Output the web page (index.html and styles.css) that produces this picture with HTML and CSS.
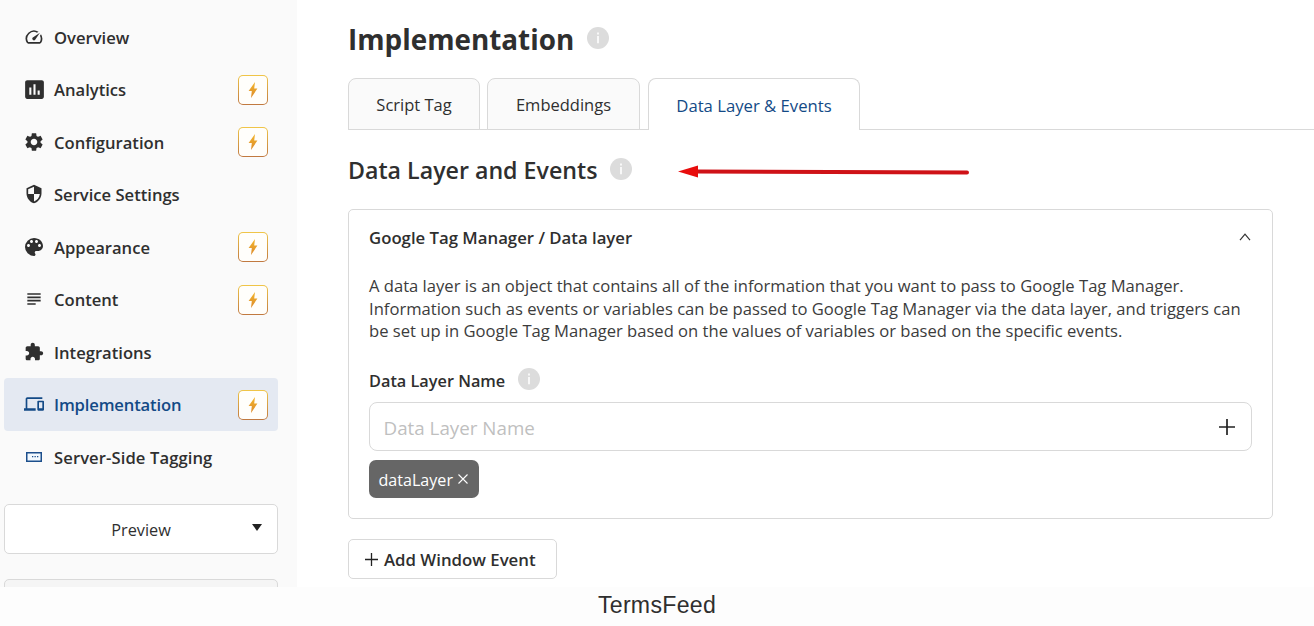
FILE: index.html
```
<!DOCTYPE html>
<html lang="en">
<head>
    <meta charset="UTF-8">
    <meta name="viewport" content="width=device-width, initial-scale=1.0">
    <title>Implementation</title>
    <link rel="stylesheet" href="styles.css">
</head>
<body>
    <svg class="defs" width="0" height="0">
        <defs>
            <linearGradient id="boltFill" x1="0" y1="0" x2="0" y2="1">
                <stop offset="0" stop-color="#f3b62c"/>
                <stop offset="1" stop-color="#dc8a2c"/>
            </linearGradient>
            <symbol id="bolt" viewBox="0 0 10 16">
                <path fill="url(#boltFill)" d="M7 0L.6 9h3.2L3 16l6.4-9.400H6.200z"/>
            </symbol>
            <symbol id="info" viewBox="0 0 22 22">
                <circle cx="11" cy="11" r="11" fill="#dcdcdc"/>
                <path fill="#fff" d="M10.2 5.5h1.6v1.9h-1.6zM10.2 9h1.6v7.2h-1.6z"/>
            </symbol>
        </defs>
    </svg>

    <div class="page">
        <aside class="sidebar">
            <nav class="menu">
                <a class="menu-item">
                    <span class="icon"><svg width="20" height="20" viewBox="0 0 24 24"><path d="M20.38 8.57l-1.23 1.85a8 8 0 0 1-.22 7.58H5.07A8 8 0 0 1 15.58 6.85l1.85-1.23A10 10 0 0 0 3.35 19a2 2 0 0 0 1.72 1h13.85a2 2 0 0 0 1.74-1 10 10 0 0 0-.27-10.44zm-9.79 6.84a2 2 0 0 0 2.83 0l5.66-8.49-8.49 5.66a2 2 0 0 0 0 2.83z"/></svg></span>
                    <span class="label">Overview</span>
                </a>
                <a class="menu-item">
                    <span class="icon"><svg width="25" height="25" viewBox="0 0 24 24"><path d="M19 3H5c-1.1 0-2 .9-2 2v14c0 1.1.9 2 2 2h14c1.1 0 2-.9 2-2V5c0-1.1-.9-2-2-2zM9 17H7v-7h2v7zm4 0h-2V7h2v10zm4 0h-2v-4h2v4z"/></svg></span>
                    <span class="label">Analytics</span>
                    <span class="badge"><svg width="10" height="16"><use href="#bolt"/></svg></span>
                </a>
                <a class="menu-item">
                    <span class="icon"><svg width="22" height="22" viewBox="0 0 24 24"><path d="M19.14 12.94c.04-.3.06-.61.06-.94 0-.32-.02-.64-.07-.94l2.03-1.58c.18-.14.23-.41.12-.61l-1.92-3.32c-.12-.22-.37-.29-.59-.22l-2.39.96c-.5-.38-1.03-.7-1.62-.94l-.36-2.54c-.04-.24-.24-.41-.48-.41h-3.84c-.24 0-.43.17-.47.41l-.36 2.54c-.59.24-1.13.57-1.62.94l-2.39-.96c-.22-.08-.47 0-.59.22L2.74 8.87c-.12.21-.08.47.12.61l2.03 1.58c-.05.3-.09.63-.09.94s.02.64.07.94l-2.03 1.58c-.18.14-.23.41-.12.61l1.92 3.32c.12.22.37.29.59.22l2.39-.96c.5.38 1.03.7 1.62.94l.36 2.54c.05.24.24.41.48.41h3.84c.24 0 .44-.17.47-.41l.36-2.54c.59-.24 1.13-.56 1.62-.94l2.39.96c.22.08.47 0 .59-.22l1.92-3.32c.12-.22.07-.47-.12-.61l-2.01-1.58zM12 15.6c-1.98 0-3.6-1.62-3.6-3.6s1.62-3.6 3.6-3.6 3.6 1.62 3.6 3.6-1.62 3.6-3.6 3.6z"/></svg></span>
                    <span class="label">Configuration</span>
                    <span class="badge"><svg width="10" height="16"><use href="#bolt"/></svg></span>
                </a>
                <a class="menu-item">
                    <span class="icon"><svg width="20" height="20" viewBox="0 0 24 24"><path d="M12 1L3 5v6c0 5.55 3.84 10.74 9 12 5.16-1.26 9-6.45 9-12V5l-9-4zm0 10.99h7c-.53 4.12-3.28 7.79-7 8.94V12H5V6.3l7-3.11v8.8z"/></svg></span>
                    <span class="label">Service Settings</span>
                </a>
                <a class="menu-item">
                    <span class="icon"><svg width="24" height="24" viewBox="0 0 24 24"><path d="M12 3a9 9 0 0 0 0 18c.83 0 1.5-.67 1.5-1.5 0-.39-.15-.74-.39-1.01-.23-.26-.38-.61-.38-.99 0-.83.67-1.5 1.5-1.5H16c2.76 0 5-2.24 5-5 0-4.42-4.03-8-9-8zm-5.5 9c-.83 0-1.5-.67-1.5-1.5S5.67 9 6.5 9 8 9.67 8 10.5 7.33 12 6.5 12zm3-4C8.67 8 8 7.33 8 6.5S8.67 5 9.5 5s1.5.67 1.5 1.5S10.33 8 9.5 8zm5 0c-.83 0-1.5-.67-1.5-1.5S13.67 5 14.5 5s1.5.67 1.5 1.5S15.33 8 14.5 8zm3 4c-.83 0-1.5-.67-1.5-1.5S16.67 9 17.5 9s1.5.67 1.5 1.5-.67 1.5-1.5 1.5z"/></svg></span>
                    <span class="label">Appearance</span>
                    <span class="badge"><svg width="10" height="16"><use href="#bolt"/></svg></span>
                </a>
                <a class="menu-item">
                    <span class="icon"><svg width="20" height="20" viewBox="0 0 24 24"><path d="M14 17H4v2h10v-2zm6-8H4v2h16V9zM4 15h16v-2H4v2zM4 5v2h16V5H4z"/></svg></span>
                    <span class="label">Content</span>
                    <span class="badge"><svg width="10" height="16"><use href="#bolt"/></svg></span>
                </a>
                <a class="menu-item">
                    <span class="icon"><svg width="20" height="20" viewBox="0 0 24 24"><path d="M20.5 11H19V7c0-1.1-.9-2-2-2h-4V3.5C13 2.12 11.88 1 10.5 1S8 2.12 8 3.5V5H4c-1.1 0-1.99.9-1.99 2v3.8H3.5c1.49 0 2.7 1.21 2.7 2.7s-1.21 2.7-2.7 2.7H2V20c0 1.1.9 2 2 2h3.8v-1.5c0-1.49 1.21-2.7 2.7-2.7 1.49 0 2.7 1.21 2.7 2.7V22H17c1.1 0 2-.9 2-2v-4h1.5c1.38 0 2.5-1.12 2.5-2.5S21.88 11 20.5 11z"/></svg></span>
                    <span class="label">Integrations</span>
                </a>
                <a class="menu-item active">
                    <span class="icon"><svg width="20" height="20" viewBox="0 0 24 24"><path d="M4 6h18V4H4c-1.1 0-2 .9-2 2v11H0v3h14v-3H4V6zm19 2h-6c-.55 0-1 .45-1 1v10c0 .55.45 1 1 1h6c.55 0 1-.45 1-1V9c0-.55-.45-1-1-1zm-1 9h-4v-7h4v7z"/></svg></span>
                    <span class="label">Implementation</span>
                    <span class="badge"><svg width="10" height="16"><use href="#bolt"/></svg></span>
                </a>
                <a class="menu-item server">
                    <span class="icon"><svg width="16" height="10" viewBox="0 0 16 10"><rect x=".75" y=".75" width="14.5" height="8.5" fill="#f2f9ff" stroke="#1c4f8c" stroke-width="1.5"/><path fill="#1c4f8c" d="M6 4h1.3v1.3H6zM8.500 4h1.3v1.3H8.500zM11 4h1.3v1.3H11z"/></svg></span>
                    <span class="label">Server-Side Tagging</span>
                </a>
            </nav>

            <button type="button" class="preview-button">
                Preview
                <span class="caret"></span>
            </button>
            <button type="button" class="next-button"></button>
        </aside>

        <main class="content">
            <h1>Implementation <svg class="info" width="22" height="22"><use href="#info"/></svg></h1>

            <div class="tabs">
                <a class="tab tab-script">Script Tag</a>
                <a class="tab tab-embed">Embeddings</a>
                <a class="tab tab-layer active">Data Layer &amp; Events</a>
            </div>

            <div class="section-title">
                <h2>Data Layer and Events</h2>
                <svg class="info" width="22" height="22"><use href="#info"/></svg>
                <svg class="arrow" width="292" height="14" viewBox="0 0 292 14">
                    <path d="M18 6.5L289 7.5" stroke="#cf1217" stroke-width="4" stroke-linecap="round"/>
                    <path d="M0 6.5L20 .5v12z" fill="#e80c0c"/>
                </svg>
            </div>

            <section class="card">
                <div class="card-header">
                    <h3>Google Tag Manager / Data layer</h3>
                    <svg width="12" height="8" viewBox="0 0 12 8"><path d="M1 7.2l5-6 5 6" fill="none" stroke="#333" stroke-width="1.2"/></svg>
                </div>
                <p>A data layer is an object that contains all of the information that you want to pass to Google Tag Manager.<br>
                Information such as events or variables can be passed to Google Tag Manager via the data layer, and triggers can<br>
                be set up in Google Tag Manager based on the values of variables or based on the specific events.</p>

                <div class="field-label">
                    <label for="layerName">Data Layer Name</label>
                    <svg class="info" width="22" height="22"><use href="#info"/></svg>
                </div>
                <div class="field">
                    <input type="text" id="layerName" placeholder="Data Layer Name">
                    <svg width="16" height="16" viewBox="0 0 16 16"><path d="M8 0v16M0 8h16" stroke="#222" stroke-width="1.7"/></svg>
                </div>
                <span class="tag">dataLayer
                    <svg width="10" height="10" viewBox="0 0 10 10"><path d="M.5.5l9 9M9.5.5l-9 9" stroke="#fff" stroke-width="1.1"/></svg>
                </span>
            </section>

            <button type="button" class="add-button">
                <svg width="13" height="13" viewBox="0 0 13 13"><path d="M6.5 0v13M0 6.5h13" stroke="#222" stroke-width="1.3"/></svg>
                <span class="label">Add Window Event</span>
            </button>
        </main>
    </div>

    <footer>TermsFeed</footer>
</body>
</html>
```
FILE: styles.css
```
* {
    box-sizing: border-box;
}

body {
    font-family: 'Open Sans', sans-serif;
    font-size: 16.5px;
    color: #2f2f2f;
    background-color: #fff;
    margin: 0;
    height: 626px;
    overflow: hidden;
}

h1, h2, h3, p {
    margin: 0;
}

button {
    font-family: inherit;
    color: inherit;
    background-color: #fff;
    border: 1px solid #d9d9d9;
    border-radius: 5px;
    cursor: pointer;
}

svg {
    display: block;
    flex: none;
}

.defs {
    position: absolute;
}

.page {
    display: flex;
    height: 587px;
    overflow: hidden;
}

/* sidebar */
.sidebar {
    width: 297px;
    flex: none;
    padding: 10.5px 19px 0 4px;
    background-color: #fafafa;
}

.menu-item {
    display: flex;
    align-items: center;
    height: 52.5px;
    padding: 0 10px 0 17px;
    border-radius: 4px;
    font-size: 16.6px;
    font-weight: 600;
}

.menu-item.active {
    background-color: #e4e9f2;
    color: #134a86;
    letter-spacing: -0.15px;
}

.menu-item.server {
    letter-spacing: 0.1px;
}

.label {
    padding-top: 1px;
}

.icon {
    display: flex;
    justify-content: center;
    width: 26px;
    margin-right: 7px;
    fill: currentColor;
}

.badge {
    display: flex;
    justify-content: center;
    align-items: center;
    width: 30px;
    height: 30px;
    margin-top: 1px;
    margin-left: auto;
    border: 1px solid transparent;
    border-radius: 5px;
    background: linear-gradient(#fffefb, #fffefb) padding-box, linear-gradient(#f0c648, #c07840) border-box;
}

.preview-button {
    display: flex;
    justify-content: center;
    align-items: center;
    position: relative;
    width: 274px;
    height: 50px;
    margin-top: 21px;
    padding: 2px 0 0;
    font-size: 16.3px;
}

.caret {
    position: absolute;
    right: 15px;
    top: 19px;
    border: 5.5px solid transparent;
    border-top: 7px solid #222;
    border-bottom: 0;
}

.next-button {
    display: block;
    width: 274px;
    height: 50px;
    margin-top: 25px;
    background-color: #f5f5f5;
}

/* main column */
.content {
    flex: 1;
    padding: 17px 0 0 51px;
}

h1 {
    display: flex;
    gap: 13px;
    height: 61px;
    font-size: 27.85px;
    font-weight: 700;
    line-height: 44px;
}

h1 .info {
    margin-top: 10px;
}

.tabs {
    display: flex;
    height: 52px;
    border-bottom: 1px solid #d9d9d9;
}

.tab {
    display: flex;
    justify-content: center;
    align-items: center;
    height: 52px;
    border: 1px solid #d9d9d9;
    border-radius: 8px 8px 0 0;
    background-color: #fafafa;
}

.tab-script {
    width: 132px;
    margin-right: 7px;
}

.tab-embed {
    width: 153px;
    margin-right: 8px;
}

.tab-layer {
    width: 212px;
    font-size: 16.7px;
}

.tab.active {
    padding-top: 2px;
    border-bottom: 0;
    background-color: #fff;
    color: #134a86;
}

.section-title {
    display: flex;
    align-items: center;
    height: 79px;
}

.section-title .info {
    margin-bottom: 2px;
}

h2 {
    width: 262px;
    font-size: 23.2px;
    font-weight: 600;
    white-space: nowrap;
}

.arrow {
    margin: 5px 0 0 46px;
}

.card {
    width: 925px;
    height: 310px;
    padding: 16px 20px 0;
    border: 1px solid #d9d9d9;
    border-radius: 5px;
}

.card-header {
    display: flex;
    justify-content: space-between;
    align-items: center;
    height: 22px;
    padding-right: 1px;
}

h3 {
    font-size: 16.75px;
    font-weight: 600;
}

.card p {
    margin-top: 27px;
    font-size: 16.6px;
    line-height: 22.7px;
    white-space: nowrap;
    color: #3c3c3c;
}

.field-label {
    display: flex;
    gap: 13px;
    align-items: center;
    height: 22px;
    margin-top: 25px;
    font-size: 16.3px;
    font-weight: 600;
}

.field-label label {
    padding-top: 3px;
}

.field {
    display: flex;
    align-items: center;
    height: 49px;
    margin-top: 12px;
    padding: 0 16px 0 13.5px;
    border: 1px solid #d9d9d9;
    border-radius: 8px;
}

.field input {
    flex: 1;
    padding: 2px 0 0;
    border: 0;
    outline: 0;
    background: none;
    font-family: inherit;
    font-size: 18.8px;
}

.field input::placeholder {
    color: #bfbfbf;
}

.tag {
    display: inline-flex;
    align-items: center;
    gap: 5px;
    height: 38px;
    margin-top: 9px;
    padding: 2px 11px 0 9.5px;
    border-radius: 7px;
    background-color: #666;
    color: #fff;
    font-size: 16.1px;
}

.tag svg {
    margin-bottom: 3px;
}

.add-button {
    display: flex;
    align-items: center;
    gap: 6px;
    width: 209px;
    height: 40px;
    margin-top: 20px;
    padding: 0 0 0 16px;
    font-size: 16.8px;
    font-weight: 600;
    white-space: nowrap;
}

footer {
    height: 39px;
    background-color: #fdfdfd;
    font-family: 'Liberation Sans', Arial, sans-serif;
    font-size: 23.1px;
    letter-spacing: 0.3px;
    line-height: 36px;
    text-align: center;
}
```
